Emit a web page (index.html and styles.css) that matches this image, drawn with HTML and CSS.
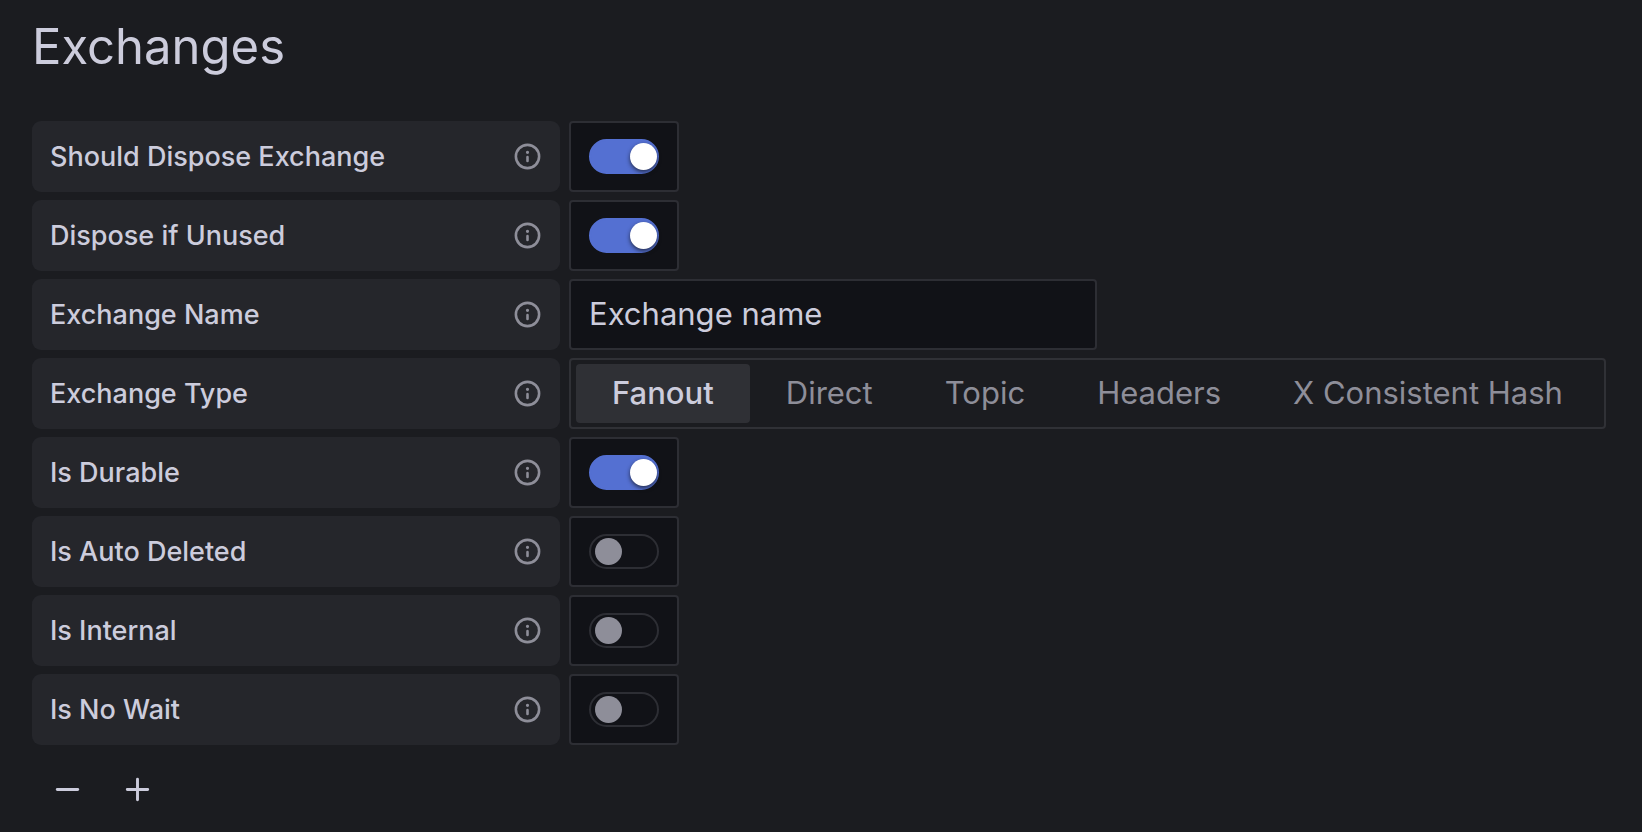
FILE: index.html
```html
<!DOCTYPE html>
<html lang="en">
<head>
<meta charset="utf-8">
<meta name="viewport" content="width=device-width, initial-scale=1">
<title>Exchanges</title>
<link rel="stylesheet" href="styles.css">
</head>
<body>
<svg class="sprite" aria-hidden="true">
  <symbol id="info" viewBox="0 0 24 24"><path d="M12 2a10 10 0 1 0 10 10A10 10 0 0 0 12 2Zm0 18a8 8 0 1 1 8-8 8 8 0 0 1-8 8Zm0-8.5a1 1 0 0 0-1 1v3a1 1 0 0 0 2 0v-3a1 1 0 0 0-1-1Zm0-4a1.25 1.25 0 1 0 1.25 1.25A1.25 1.25 0 0 0 12 7.500Z"/></symbol>
</svg>
<main class="page">
  <h1 class="title">Exchanges</h1>
  <form class="fields">
    <div class="row">
      <div class="name"><label for="dispose">Should Dispose Exchange</label><button type="button" class="info" aria-label="About Should Dispose Exchange"><svg class="icon"><use href="#info"/></svg></button></div>
      <div class="toggle"><input class="switch" type="checkbox" id="dispose" checked></div>
    </div>
    <div class="row">
      <div class="name"><label for="unused">Dispose if Unused</label><button type="button" class="info" aria-label="About Dispose if Unused"><svg class="icon"><use href="#info"/></svg></button></div>
      <div class="toggle"><input class="switch" type="checkbox" id="unused" checked></div>
    </div>
    <div class="row">
      <div class="name"><label for="exchange-name">Exchange Name</label><button type="button" class="info" aria-label="About Exchange Name"><svg class="icon"><use href="#info"/></svg></button></div>
      <input class="text" type="text" id="exchange-name" value="Exchange name">
    </div>
    <div class="row">
      <div class="name"><span id="type-label">Exchange Type</span><button type="button" class="info" aria-label="About Exchange Type"><svg class="icon"><use href="#info"/></svg></button></div>
      <div class="options" role="radiogroup" aria-labelledby="type-label">
        <label class="option"><input class="radio" type="radio" name="type" checked>Fanout</label>
        <label class="option"><input class="radio" type="radio" name="type">Direct</label>
        <label class="option"><input class="radio" type="radio" name="type">Topic</label>
        <label class="option"><input class="radio" type="radio" name="type">Headers</label>
        <label class="option"><input class="radio" type="radio" name="type">X Consistent Hash</label>
      </div>
    </div>
    <div class="row">
      <div class="name"><label for="durable">Is Durable</label><button type="button" class="info" aria-label="About Is Durable"><svg class="icon"><use href="#info"/></svg></button></div>
      <div class="toggle"><input class="switch" type="checkbox" id="durable" checked></div>
    </div>
    <div class="row">
      <div class="name"><label for="auto-deleted">Is Auto Deleted</label><button type="button" class="info" aria-label="About Is Auto Deleted"><svg class="icon"><use href="#info"/></svg></button></div>
      <div class="toggle"><input class="switch" type="checkbox" id="auto-deleted"></div>
    </div>
    <div class="row">
      <div class="name"><label for="internal">Is Internal</label><button type="button" class="info" aria-label="About Is Internal"><svg class="icon"><use href="#info"/></svg></button></div>
      <div class="toggle"><input class="switch" type="checkbox" id="internal"></div>
    </div>
    <div class="row">
      <div class="name"><label for="no-wait">Is No Wait</label><button type="button" class="info" aria-label="About Is No Wait"><svg class="icon"><use href="#info"/></svg></button></div>
      <div class="toggle"><input class="switch" type="checkbox" id="no-wait"></div>
    </div>
    <div class="actions">
      <button type="button" class="action" aria-label="Remove exchange"><svg class="glyph" viewBox="0 0 24 24"><path d="M5 12h14"/></svg></button>
      <button type="button" class="action" aria-label="Add exchange"><svg class="glyph" viewBox="0 0 24 24"><path d="M5 12h14M12 5v14"/></svg></button>
    </div>
  </form>
</main>
</body>
</html>
```
FILE: styles.css
```css
* {
  box-sizing: border-box;
}

body {
  margin: 0;
  background: #1b1c20;
  color: #ccccdc;
  font-family: Inter, "Liberation Sans", sans-serif;
}

.sprite {
  display: none;
}

.page {
  padding: 15px 32px 0;
}

.title {
  margin: 0 0 42px;
  font-size: 49px;
  font-weight: 400;
  line-height: 64px;
}

.fields {
  display: flex;
  flex-direction: column;
  gap: 8px;
}

.row {
  display: flex;
  gap: 9px;
  min-height: 71px;
}

.name {
  display: flex;
  flex: 0 0 528px;
  align-items: center;
  justify-content: space-between;
  padding: 0 17px 0 18px;
  border-radius: 9px;
  background: #25262b;
  font-size: 27px;
  font-weight: 500;
}

.info,
.action {
  display: flex;
  align-items: center;
  justify-content: center;
  padding: 0;
  border: 0;
  background: none;
  color: inherit;
}

.info {
  color: #8e8e99;
}

.icon {
  width: 31px;
  height: 31px;
  fill: currentColor;
}

.toggle,
.text,
.options {
  border: 2px solid #2d2e34;
  border-radius: 4px;
}

.toggle {
  display: flex;
  align-items: center;
  padding: 0 18px;
  background: #111217;
}

.switch {
  display: flex;
  align-items: center;
  width: 70px;
  height: 35px;
  margin: 0;
  padding: 0 4px;
  border: 2px solid #2d2e34;
  border-radius: 18px;
  background: #111217;
  appearance: none;
}

.switch::before {
  width: 27px;
  height: 27px;
  border-radius: 50%;
  background: #8e8e99;
  content: "";
}

.switch:checked {
  justify-content: flex-end;
  padding: 0;
  border-color: #5470d2;
  background: #5470d2;
}

.switch:checked::before {
  background: #fff;
  box-shadow: 0 2px 4px #111217b3;
}

.text {
  width: 528px;
  padding: 0 18px 2px;
  background: #111217;
  color: inherit;
  font-family: inherit;
  font-size: 31px;
}

.options {
  display: flex;
  padding: 4px 5px;
  border-color: #303136;
}

.option {
  display: flex;
  align-items: center;
  padding: 0 36px 2px;
  border-radius: 4px;
  color: #8e8e99;
  font-size: 31px;
  white-space: nowrap;
}

.option:has(:checked) {
  background: #2f3035;
  color: #ccccdc;
  font-weight: 500;
}

.radio {
  width: 0;
  height: 0;
  margin: 0;
  appearance: none;
}

.actions {
  display: flex;
  padding-top: 1px;
}

.action {
  width: 70px;
  height: 70px;
}

.glyph {
  width: 35px;
  height: 35px;
  fill: none;
  stroke: currentColor;
  stroke-width: 2;
  stroke-linecap: round;
}
```
